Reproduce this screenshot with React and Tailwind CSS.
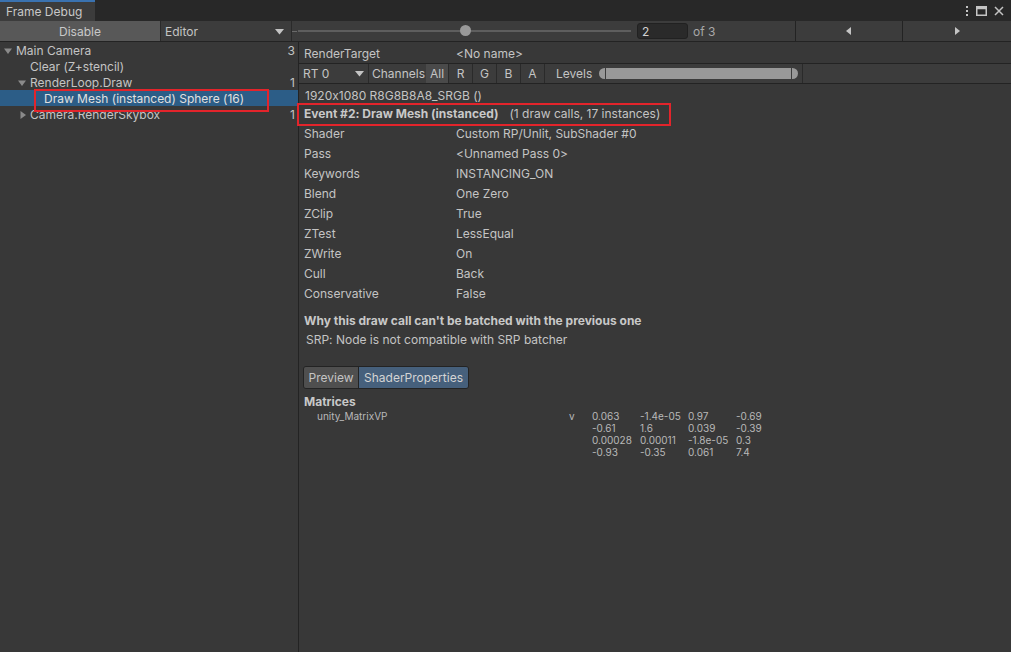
import React from "react";

const Tri = ({ dir = "down" }) => (
  <svg width="8" height="8" viewBox="0 0 8 8" className="shrink-0">
    {dir === "down" ? (
      <path d="M0 1.5 L8 1.5 L4 7 Z" fill="#8a8a8a" />
    ) : (
      <path d="M1.5 0 L7 4 L1.5 8 Z" fill="#8a8a8a" />
    )}
  </svg>
);

const rows = [
  ["Shader", "Custom RP/Unlit, SubShader #0"],
  ["Pass", "<Unnamed Pass 0>"],
  ["Keywords", "INSTANCING_ON"],
  ["Blend", "One Zero"],
  ["ZClip", "True"],
  ["ZTest", "LessEqual"],
  ["ZWrite", "On"],
  ["Cull", "Back"],
  ["Conservative", "False"],
];

const matrix = [
  ["0.063", "-1.4e-05", "0.97", "-0.69"],
  ["-0.61", "1.6", "0.039", "-0.39"],
  ["0.00028", "0.00011", "-1.8e-05", "0.3"],
  ["-0.93", "-0.35", "0.061", "7.4"],
];

export default function App() {
  return (
    <div
      className="w-[1011px] h-[652px] bg-[#383838] flex flex-col text-[12px] text-[#c4c4c4] overflow-hidden relative [font-feature-settings:'calt'_0]"
      style={{ fontFamily: "Inter, 'Noto Sans', sans-serif" }}
    >
      {/* top tab bar */}
      <div className="h-[21px] bg-[#282828] flex items-stretch shrink-0">
        <div className="w-[95px] bg-[#3c3c3c] border-t-2 border-[#3a72b0] flex items-center pl-[6px] text-[#c8c8c8]">
          Frame Debug
        </div>
        <div className="flex-1" />
        <div className="flex items-center gap-[7px] pr-[7px] text-[#c4c4c4]">
          <svg width="4" height="12" viewBox="0 0 4 12">
            <rect x="1" y="1" width="2" height="2" fill="#c4c4c4" />
            <rect x="1" y="5" width="2" height="2" fill="#c4c4c4" />
            <rect x="1" y="9" width="2" height="2" fill="#c4c4c4" />
          </svg>
          <svg width="11" height="10" viewBox="0 0 11 10">
            <rect x="0.75" y="0.75" width="9.5" height="8.5" fill="none" stroke="#c4c4c4" strokeWidth="1.5" />
            <rect x="0.75" y="0.75" width="9.5" height="2.5" fill="#c4c4c4" />
          </svg>
          <svg width="10" height="10" viewBox="0 0 10 10">
            <path d="M1 1 L9 9 M9 1 L1 9" stroke="#c4c4c4" strokeWidth="1.5" />
          </svg>
        </div>
      </div>

      {/* toolbar */}
      <div className="h-[21px] bg-[#3c3c3c] border-b border-[#232323] flex items-stretch shrink-0">
        <div className="w-[161px] bg-[#585858] border-r border-[#2a2a2a] flex items-center justify-center pt-[2px] text-[#c8c8c8]">
          Disable
        </div>
        <div className="w-[131px] bg-[#3c3c3c] border-r border-[#2a2a2a] flex items-center justify-between pl-[4px] pr-[7px] pt-[2px]">
          <span>Editor</span>
          <svg width="9" height="6" viewBox="0 0 9 6">
            <path d="M0 0 L9 0 L4.5 5.5 Z" fill="#c4c4c4" />
          </svg>
        </div>
        <div className="w-[6px] flex items-center">
          <div className="w-[5px] h-[1px] bg-[#6a6a6a]" />
        </div>
        <div className="w-[333px] relative flex items-center">
          <div className="h-[2px] w-full bg-[#5e5e5e]" />
          <div className="absolute left-[162px] top-[4px] w-[11px] h-[11px] rounded-full bg-[#999999]" />
        </div>
        <div className="ml-[6px] my-[2px] w-[51px] bg-[#2a2a2a] border border-[#212121] rounded-[3px] flex items-center pl-[4px] pt-[1px] text-[#d2d2d2]">
          2
        </div>
        <div className="flex items-center pl-[5px] pt-[2px] w-[108px] text-[#a8a8a8] border-r border-[#232323]">
          of 3
        </div>
        <div className="w-[107px] flex items-center justify-center border-r border-[#232323]">
          <svg width="6" height="8" viewBox="0 0 6 8">
            <path d="M5 0 L5 8 L0 4 Z" fill="#c4c4c4" />
          </svg>
        </div>
        <div className="flex-1 flex items-center justify-center">
          <svg width="6" height="8" viewBox="0 0 6 8">
            <path d="M1 0 L1 8 L6 4 Z" fill="#c4c4c4" />
          </svg>
        </div>
      </div>

      {/* main */}
      <div className="flex-1 flex relative">
        {/* left tree */}
        <div className="w-[299px] border-r border-[#232323] flex flex-col relative">
          <div className="h-[16px] flex items-center pl-[4px] pr-[3px] pt-[2px]">
            <Tri />
            <span className="ml-[4px] flex-1">Main Camera</span>
            <span>3</span>
          </div>
          <div className="h-[16px] flex items-center pl-[30px] pr-[3px] pt-[2px]">
            <span className="flex-1">Clear (Z+stencil)</span>
          </div>
          <div className="h-[16px] flex items-center pl-[18px] pr-[3px] pt-[2px]">
            <Tri />
            <span className="ml-[4px] flex-1">RenderLoop.Draw</span>
            <span>1</span>
          </div>
          <div className="h-[16px] flex items-center pl-[44px] pr-[3px] pt-[2px] bg-[#2c5d87] text-[#e0e0e0]">
            <span className="flex-1">Draw Mesh (instanced) Sphere (16)</span>
          </div>
          <div className="h-[16px] flex items-center pl-[19px] pr-[3px] pt-[2px]">
            <Tri dir="right" />
            <span className="ml-[3px] flex-1">Camera.RenderSkybox</span>
            <span>1</span>
          </div>
        </div>

        {/* right panel */}
        <div className="flex-1 flex flex-col">
          <div className="h-[21px] flex items-center pl-[5px] pt-[2px]">
            <span className="w-[152px]">RenderTarget</span>
            <span>&lt;No name&gt;</span>
          </div>
          <div className="h-[21px] flex items-stretch border-y border-[#232323] bg-[#3c3c3c]">
            <div className="w-[70px] flex items-center justify-between pl-[4px] pr-[4px] border-r border-[#2a2a2a]">
              <span>RT 0</span>
              <svg width="9" height="6" viewBox="0 0 9 6">
                <path d="M0 0 L9 0 L4.5 5.5 Z" fill="#c4c4c4" />
              </svg>
            </div>
            <div className="w-[57px] flex items-center pl-[3px]">Channels</div>
            <div className="w-[23px] flex items-center justify-center bg-[#4a4a4a] border-r border-[#2a2a2a]">All</div>
            <div className="w-[24px] flex items-center justify-center border-r border-[#2a2a2a]">R</div>
            <div className="w-[24px] flex items-center justify-center border-r border-[#2a2a2a]">G</div>
            <div className="w-[24px] flex items-center justify-center border-r border-[#2a2a2a]">B</div>
            <div className="w-[24px] flex items-center justify-center border-r border-[#2a2a2a]">A</div>
            <div className="w-[258px] flex items-center pl-[11px] border-r border-[#2a2a2a]">
              <span>Levels</span>
              <div className="ml-[7px] w-[199px] h-[11px] flex">
                <div className="w-[6px] h-[11px] rounded-l-full bg-[#999999]" />
                <div className="w-[1px] h-[11px] bg-[#3c3c3c]" />
                <div className="flex-1 h-[11px] bg-[#999999]" />
                <div className="w-[1px] h-[11px] bg-[#3c3c3c]" />
                <div className="w-[6px] h-[11px] rounded-r-full bg-[#999999]" />
              </div>
            </div>
            <div className="flex-1" />
          </div>
          <div className="h-[20px] flex items-center pl-[6px] pt-[3px]">1920x1080 R8G8B8A8_SRGB ()</div>
          <div className="h-[20px] flex items-center pl-[5px]">
            <span className="font-bold text-[#c8c8c8]">Event #2: Draw Mesh (instanced)</span>
            <span className="ml-[11px]">(1 draw calls, 17 instances)</span>
          </div>
          {rows.map(([k, v]) => (
            <div key={k} className="h-[20px] flex items-center pl-[5px]">
              <span className="w-[152px]">{k}</span>
              <span>{v}</span>
            </div>
          ))}
          <div className="h-[18px] mt-[8px] flex items-center pl-[5px] font-bold text-[#c8c8c8]">
            Why this draw call can't be batched with the previous one
          </div>
          <div className="h-[18px] flex items-center pl-[7px] pt-[1px]">SRP: Node is not compatible with SRP batcher</div>
          <div className="mt-[18px] ml-[4px] flex h-[23px] w-fit border border-[#232323] rounded-[3px] overflow-hidden">
            <div className="w-[55px] bg-[#4f4f4f] flex items-center justify-center border-r border-[#232323]">Preview</div>
            <div className="w-[109px] bg-[#46607c] flex items-center justify-center text-[#d4d4d4]">ShaderProperties</div>
          </div>
          <div className="mt-[5px] h-[16px] flex items-center pl-[5px] font-bold text-[#c8c8c8]">Matrices</div>
          <div className="flex text-[10px] leading-[12px] text-[#b8b8b8]">
            <div className="w-[270px] pl-[18px]">unity_MatrixVP</div>
            <div className="w-[23px]">v</div>
            <div className="flex flex-col">
              {matrix.map((r, i) => (
                <div key={i} className="flex">
                  {r.map((c, j) => (
                    <span key={j} className="w-[48px]">{c}</span>
                  ))}
                </div>
              ))}
            </div>
          </div>
        </div>
      </div>

      {/* red highlight boxes */}
      <div className="absolute left-[34px] top-[89px] w-[235px] h-[23px] border-2 border-[#e3242b] pointer-events-none" />
      <div className="absolute left-[297px] top-[103px] w-[374px] h-[23px] border-2 border-[#e3242b] pointer-events-none" />
    </div>
  );
}
